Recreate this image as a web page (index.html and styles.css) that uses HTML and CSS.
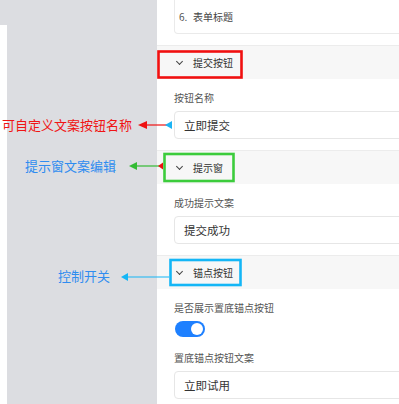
FILE: index.html
```html
<!DOCTYPE html>
<html lang="zh">
<head>
<meta charset="utf-8">
<link rel="stylesheet" href="styles.css">
</head>
<body>
<div class="page">
  <div class="side"><div class="side-edge"></div></div>
  <div class="panel">
    <div class="top-item"><span class="num">6.</span><span>表单标题</span></div>

    <section class="sec">
      <div class="band"><span class="chev"></span><span>提交按钮</span></div>
      <div class="body">
        <div class="label">按钮名称</div>
        <div class="input">立即提交</div>
      </div>
    </section>

    <section class="sec">
      <div class="band"><span class="chev"></span><span>提示窗</span></div>
      <div class="body">
        <div class="label">成功提示文案</div>
        <div class="input">提交成功</div>
      </div>
    </section>

    <section class="sec">
      <div class="band"><span class="chev"></span><span>锚点按钮</span></div>
      <div class="body">
        <div class="label">是否展示置底锚点按钮</div>
        <div class="switch"><span class="knob"></span></div>
        <div class="label label-gap">置底锚点按钮文案</div>
        <div class="input">立即试用</div>
      </div>
    </section>
  </div>

  <span class="note note-red">可自定义文案按钮名称</span>
  <span class="note note-blue1">提示窗文案编辑</span>
  <span class="note note-blue2">控制开关</span>

  <svg class="marks" width="399" height="404" viewBox="0 0 399 404">
    <rect x="158.5" y="51.5" width="83" height="26" fill="none" stroke="#f01010" stroke-width="2.6"/>
    <rect x="164.5" y="154" width="69" height="27" fill="none" stroke="#3ccc3c" stroke-width="2.6"/>
    <rect x="170.5" y="260" width="70" height="25" fill="none" stroke="#14b6f6" stroke-width="2.6"/>

    <line x1="144" y1="125" x2="172" y2="125" stroke="#ee1111" stroke-width="1.2"/>
    <polygon points="138,125 147,121 147,129" fill="#ee1111"/>
    <polygon points="165,125 172,121 172,129" fill="#1cb4f4"/>

    <line x1="135" y1="166" x2="160" y2="166" stroke="#33bb33" stroke-width="1.2"/>
    <polygon points="129,166 137,162 137,170" fill="#33bb33"/>
    <polygon points="158,166 163,162.5 163,169.5" fill="#ee1111"/>

    <line x1="126" y1="277" x2="169" y2="277" stroke="#14b6f6" stroke-width="1.2"/>
    <polygon points="121,277 128,273 128,281" fill="#14b6f6"/>
  </svg>
</div>
</body>
</html>
```

FILE: styles.css
```css
html, body {
  margin: 0;
  padding: 0;
  background: #ffffff;
}
body {
  font-family: "Noto Sans CJK SC", "Noto Sans", "Liberation Sans", sans-serif;
  color: #333333;
}
.page {
  position: relative;
  width: 399px;
  height: 404px;
  overflow: hidden;
  display: flex;
}
.side {
  width: 157px;
  flex: none;
  background: #dcdde1;
  display: flex;
  flex-direction: column;
}
.side-edge {
  margin-top: 25px;
  width: 7px;
  flex: 1;
  background: #ffffff;
}
.panel {
  width: 242px;
  flex: none;
  overflow: hidden;
  background: #ffffff;
}
.top-item {
  margin-left: 17px;
  width: 280px;
  height: 33px;
  border: 1px solid #eaeaea;
  border-top: none;
  border-radius: 0 0 0 4px;
  display: flex;
  align-items: center;
  padding-left: 4px;
  font-size: 10px;
  color: #444444;
  box-sizing: content-box;
}
.top-item .num {
  width: 14px;
  color: #555555;
}
.sec {
  margin-top: 11px;
}
.band {
  height: 33px;
  border-top: 1px solid #ececec;
  background: #f7f7f7;
  display: flex;
  align-items: center;
  padding-left: 20px;
  font-size: 10px;
  color: #333333;
}
.chev {
  width: 4px;
  height: 4px;
  border-right: 1.2px solid #444444;
  border-bottom: 1.2px solid #444444;
  transform: rotate(45deg);
  margin-top: -3px;
  margin-right: 11px;
}
.body {
  padding: 13px 0 0 17px;
}
.label {
  font-size: 10px;
  line-height: 12px;
  color: #555555;
}
.label-gap {
  margin-top: 15px;
}
.input {
  margin-top: 7px;
  width: 280px;
  height: 26px;
  border: 1px solid #e6e6e6;
  border-radius: 4px;
  display: flex;
  align-items: center;
  padding-left: 9px;
  font-size: 11.5px;
  color: #333333;
}
.switch {
  margin-top: 7px;
  margin-left: 1px;
  width: 30px;
  height: 16px;
  border-radius: 8px;
  background: #1e80ff;
  display: flex;
  align-items: center;
  justify-content: flex-end;
  padding-right: 2px;
  box-sizing: border-box;
}
.knob {
  width: 12px;
  height: 12px;
  border-radius: 50%;
  background: #ffffff;
}
.note {
  position: absolute;
  font-size: 13px;
  line-height: 16px;
  white-space: nowrap;
}
.note-red {
  left: 2px;
  top: 117px;
  color: #f01414;
}
.note-blue1 {
  left: 25px;
  top: 158px;
  color: #2e8cf0;
}
.note-blue2 {
  left: 58px;
  top: 268px;
  color: #2e8cf0;
}
.marks {
  position: absolute;
  left: 0;
  top: 0;
  pointer-events: none;
}
```
